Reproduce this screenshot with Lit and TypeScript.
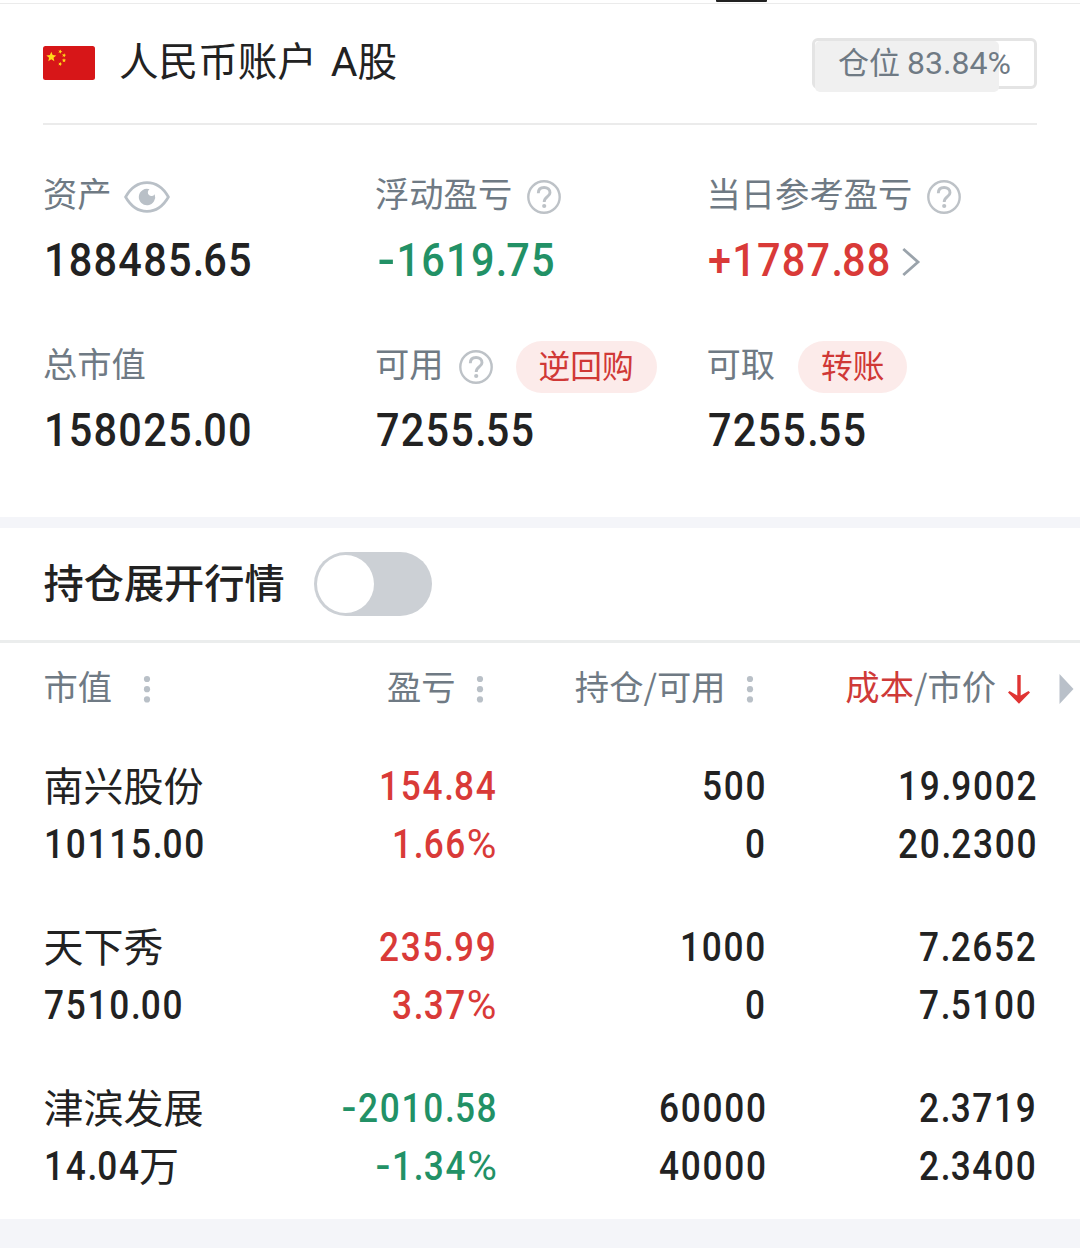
import { LitElement, html, svg, css, nothing } from "lit";
import { customElement, property } from "lit/decorators.js";

type Tone = "up" | "down" | "plain";

interface Holding {
  name: string;
  value: string;
  unit?: string;
  profit: string;
  rate: string;
  tone: Tone;
  held: string;
  usable: string;
  cost: string;
  price: string;
}

const HOLDINGS: Holding[] = [
  { name: "南兴股份", value: "10115.00", profit: "154.84", rate: "1.66%", tone: "up", held: "500", usable: "0", cost: "19.9002", price: "20.2300" },
  { name: "天下秀", value: "7510.00", profit: "235.99", rate: "3.37%", tone: "up", held: "1000", usable: "0", cost: "7.2652", price: "7.5100" },
  { name: "津滨发展", value: "14.04", unit: "万", profit: "-2010.58", rate: "-1.34%", tone: "down", held: "60000", usable: "40000", cost: "2.3719", price: "2.3400" },
];

const star = (cx: number, cy: number, r: number, turn = 0) => {
  const pts = Array.from({ length: 10 }, (_, i) => {
    const a = ((i * 36 - 90 + turn) * Math.PI) / 180;
    const d = i % 2 ? r * 0.45 : r;
    return `${(cx + d * Math.cos(a)).toFixed(2)},${(cy + d * Math.sin(a)).toFixed(2)}`;
  }).join(" ");
  return svg`<polygon points=${pts} fill="#ffd91a"></polygon>`;
};

const flag = html`<svg class="flag" width="52" height="34" viewBox="0 0 52 34">
  <rect width="52" height="34" rx="2.5" fill="#d71618"></rect>
  ${star(8.3, 11, 5.2)} ${star(17.2, 5.6, 2.2, 20)} ${star(21, 9.3, 2.2, 10)} ${star(21, 14.4, 2.2)} ${star(17.2, 18, 2.2, 20)}
</svg>`;

const eye = html`<svg class="eye" width="46" height="32" viewBox="0 0 46 32">
  <path d="M1.6 16C7 6.500 14.500 1.700 23 1.700S39 6.500 44.400 16C39 25.500 31.500 30.300 23 30.300S7 25.500 1.600 16Z" fill="none" stroke="#b9c0c7" stroke-width="2.700"></path>
  <path d="M25.500 8.200A8.200 8.200 0 1 0 30.700 13.200A3.700 3.700 0 1 1 25.500 8.200Z" fill="#b9c0c7"></path>
</svg>`;

const help = html`<svg class="help" width="34" height="34" viewBox="0 0 34 34">
  <circle cx="17" cy="17" r="15.700" fill="none" stroke="#bdc2c7" stroke-width="2.400"></circle>
  <path d="M11.300 13.200C11.300 9.400 13.700 7.500 17.100 7.500C20.600 7.500 23 9.600 23 12.700C23 16.700 17.200 16.800 17.200 22" fill="none" stroke="#bdc2c7" stroke-width="2.900"></path>
  <circle cx="17.200" cy="26" r="2.100" fill="#bdc2c7"></circle>
</svg>`;

const chevron = html`<svg class="chevron" width="20" height="30" viewBox="0 0 20 30">
  <path d="M2.300 2L17 15L2.300 28" fill="none" stroke="#9aa3ab" stroke-width="2.800"></path>
</svg>`;

const dots = html`<svg class="dots" width="8" height="28" viewBox="0 0 8 28">
  <circle cx="4" cy="4" r="3.100" fill="#b9c0c7"></circle>
  <circle cx="4" cy="14.200" r="3.100" fill="#b9c0c7"></circle>
  <circle cx="4" cy="24.400" r="3.100" fill="#b9c0c7"></circle>
</svg>`;

const arrowDown = html`<svg class="sort" width="22" height="29" viewBox="0 0 22 29">
  <path d="M9.300 0H12.700V20.500L20.500 16L22 17.500L11 28.700L0 17.500L1.500 16L9.300 20.500Z" fill="#e03433"></path>
</svg>`;

const triangle = html`<svg class="more" width="15" height="30" viewBox="0 0 15 30">
  <path d="M0.500 0L14.500 15L0.500 30Z" fill="#b9c0c9"></path>
</svg>`;

/** Widths of the narrow numerals, in pixels, by figure size. */
const ADVANCE = {
  small: { digit: 21.5, dot: 9.5, dash: 18, percent: 30.5 },
  large: { digit: 24.5, dot: 9.9, dash: 20.5, percent: 32 },
};

/** A figure set in narrow, slightly spaced numerals. */
@customElement("app-figure")
export class AppFigure extends LitElement {
  @property() value = "";
  @property() tone: Tone = "plain";
  @property({ type: Boolean, reflect: true }) large = false;

  static styles = css`
    :host { display: block; font: 500 40px/58px Roboto, "Noto Sans CJK SC", sans-serif; }
    .box { display: block; white-space: nowrap; }
    .text { display: inline-block; letter-spacing: 1.970px; transform: scaleX(0.88); transform-origin: left; }
    .dot { letter-spacing: 0.100px; }
    .dash { display: inline-block; width: 20.500px; letter-spacing: 0; text-align: center; transform: scaleX(1.250); }
    .percent { display: inline-block; font-weight: 400; letter-spacing: 0; transform: scaleX(1.150); transform-origin: left; }
    :host([large]) { font-size: 46px; line-height: 60px; }
    :host([large]) .text { letter-spacing: 1.400px; transform: scaleX(0.9); }
    :host([large]) .dot { letter-spacing: -1.100px; }
    :host([large]) .dash { width: 22.800px; }
    .up { color: #d93a38; }
    .down { color: #229166; }
    .plain { color: #222; }
  `;

  render() {
    const adv = this.large ? ADVANCE.large : ADVANCE.small;
    const kind = (c: string) => (c === "." ? "dot" : c === "-" ? "dash" : c === "%" ? "percent" : "digit");
    const width = [...this.value].reduce((w, c) => w + adv[kind(c)], 0);
    const parts = this.value.match(/[+\d]+|[.\-%]/g) ?? [];
    return html`<span class="box ${this.tone}" style="width:${width.toFixed(1)}px"><span class="text">${parts.map((p) =>
      /\d|\+/.test(p) ? p : html`<span class=${kind(p)}>${p}</span>`)}</span></span>`;
  }
}

@customElement("app-root")
export class AppRoot extends LitElement {
  static styles = css`
    :host { display: block; width: 1080px; height: 1257px; background: #fff; color: #222; font-family: "Noto Sans CJK SC", sans-serif; overflow: hidden; }
    * { box-sizing: border-box; }
    svg { display: block; flex: none; }

    .tabs { height: 4px; padding-left: 716px; border-bottom: 1px solid #ebebeb; }
    .tab-mark { width: 51px; height: 2px; background: #222; border-radius: 0 0 1px 1px; }

    .account { height: 121px; margin: 0 43px; border-bottom: 2px solid #ebebeb; display: flex; align-items: flex-start; }
    .flag { margin-top: 42px; }
    .title { margin: 26px auto 0 24px; font-size: 39.600px; line-height: 58px; white-space: pre; word-spacing: 5px; }
    .latin { font-family: Roboto, sans-serif; font-size: 41px; line-height: 1; }
    .position { position: relative; width: 225px; height: 51px; margin-top: 34px; border: 3px solid #e4e4e4; border-radius: 6px; }
    .position-fill { position: absolute; left: 0; top: 0; height: 51px; background: #f0f0f0; border-radius: 5px; }
    .position-text { position: absolute; left: 23px; top: -2px; display: flex; gap: 7px; color: #6f7a84; font-size: 31px; line-height: 43px; white-space: nowrap; }
    .position-num { font: 400 32px/48px Roboto, sans-serif; }

    .stats { display: grid; grid-template-columns: 332px 331.500px 1fr; grid-auto-rows: 170px; padding: 39px 0 0 43px; height: 392px; }
    .label { display: flex; align-items: center; height: 60px; font-size: 34.300px; line-height: 60px; color: #6f7a84; white-space: nowrap; }
    .label-text { position: relative; top: -2px; }
    .eye { margin-left: 12px; margin-top: 6px; }
    .help { margin-left: 15px; margin-top: 6px; }
    .pill { height: 52px; padding: 0 23px; margin-left: 23px; margin-top: 6px; border-radius: 26px; background: #fcebea; color: #d03836; font-size: 31.700px; line-height: 46px; }
    .amount { display: flex; align-items: center; height: 66px; padding: 6px 0 0 1px; }
    .chevron { margin-left: 12.500px; margin-top: 4px; }

    .band { height: 11px; background: #f4f5f9; }
    .expand { height: 115px; padding-left: 43.500px; border-bottom: 3px solid #ebeded; display: flex; align-items: center; font-size: 40.200px; font-weight: 500; }
    .expand-text { position: relative; top: -3px; line-height: 60px; }
    .toggle { width: 118px; height: 64px; margin-left: 29.500px; padding: 3px; border-radius: 32px; background: #ccd0d5; }
    .knob { width: 57px; height: 58px; border-radius: 50%; background: #fff; }

    .cols { display: grid; grid-template-columns: 249.500px 203px 270px 270px 1fr; padding-left: 43.500px; }
    .head { height: 114px; padding-top: 15px; font-size: 34.300px; line-height: 58px; color: #6f7a84; }
    .head-cell { display: flex; align-items: center; height: 60px; justify-content: flex-end; white-space: nowrap; }
    .head-first { justify-content: flex-start; }
    .head .label-text { top: -3px; }
    .head .dots { margin: 2px 12.500px 0 20px; }
    .head-first .dots { margin-left: 31px; }
    .active { color: #cf3a38; }
    .sort { margin: 3px 6px 0 12px; }
    .more { margin: 2px 0 0 22.500px; }
    .row { height: 161px; }
    .cell { display: flex; flex-direction: column; align-items: flex-end; }
    .cell-first { align-items: flex-start; }
    .line { height: 58px; padding-top: 1px; font-size: 40px; line-height: 58px; white-space: nowrap; display: flex; align-items: center; }
    .name { position: relative; top: -3px; }
    .footer { height: 29px; margin-top: -21px; background: #f4f5f9; }
  `;

  private stat(label: string, value: string, opts: { tone?: Tone; icon?: unknown; pill?: string; link?: boolean } = {}) {
    return html`<div class="stat">
      <div class="label"><span class="label-text">${label}</span>${opts.icon ?? nothing}${opts.pill ? html`<span class="pill">${opts.pill}</span>` : nothing}</div>
      <div class="amount"><app-figure large .value=${value} .tone=${opts.tone ?? "plain"}></app-figure>${opts.link ? chevron : nothing}</div>
    </div>`;
  }

  private pair(a: string, b: string, tone: Tone = "plain") {
    return html`<div class="cell">
      <div class="line"><app-figure .value=${a} .tone=${tone}></app-figure></div>
      <div class="line"><app-figure .value=${b} .tone=${tone}></app-figure></div>
    </div>`;
  }

  private row(h: Holding) {
    return html`<div class="cols row">
      <div class="cell cell-first">
        <div class="line"><span class="name">${h.name}</span></div>
        <div class="line"><app-figure .value=${h.value}></app-figure>${h.unit ? html`<span class="name">${h.unit}</span>` : nothing}</div>
      </div>
      ${this.pair(h.profit, h.rate, h.tone)} ${this.pair(h.held, h.usable)} ${this.pair(h.cost, h.price)}
    </div>`;
  }

  render() {
    const share = 83.84;
    return html`
      <div class="tabs"><div class="tab-mark"></div></div>
      <header class="account">
        ${flag}
        <div class="title">人民币账户 <span class="latin">A</span>股</div>
        <div class="position">
          <div class="position-fill" style="width:${share}%"></div>
          <div class="position-text"><span>仓位</span><span class="position-num">${share}%</span></div>
        </div>
      </header>
      <section class="stats">
        ${this.stat("资产", "188485.65", { icon: eye })}
        ${this.stat("浮动盈亏", "-1619.75", { tone: "down", icon: help })}
        ${this.stat("当日参考盈亏", "+1787.88", { tone: "up", icon: help, link: true })}
        ${this.stat("总市值", "158025.00")}
        ${this.stat("可用", "7255.55", { icon: help, pill: "逆回购" })}
        ${this.stat("可取", "7255.55", { pill: "转账" })}
      </section>
      <div class="band"></div>
      <div class="expand"><span class="expand-text">持仓展开行情</span><div class="toggle"><div class="knob"></div></div></div>
      <div class="cols head">
        <div class="head-cell head-first"><span class="label-text">市值</span>${dots}</div>
        <div class="head-cell"><span class="label-text">盈亏</span>${dots}</div>
        <div class="head-cell"><span class="label-text">持仓/可用</span>${dots}</div>
        <div class="head-cell"><span class="label-text"><span class="active">成本</span>/市价</span>${arrowDown}</div>
        <div class="head-cell head-first">${triangle}</div>
      </div>
      ${HOLDINGS.map((h) => this.row(h))}
      <div class="footer"></div>
    `;
  }
}
